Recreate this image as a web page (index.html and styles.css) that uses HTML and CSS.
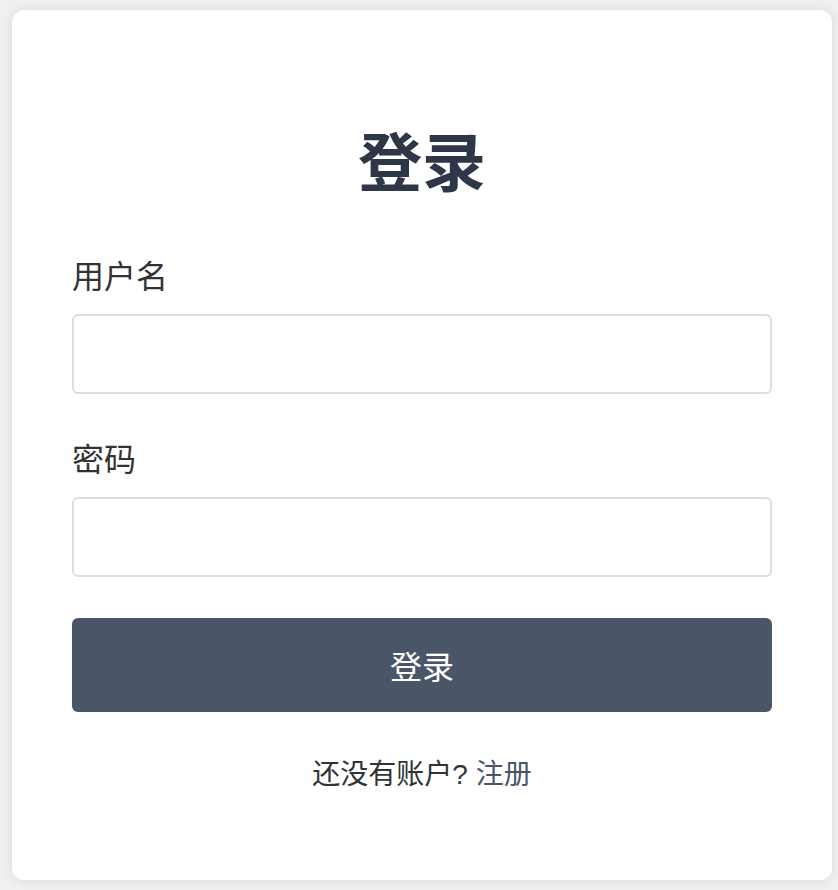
FILE: index.html
```html
<!DOCTYPE html>
<html lang="zh-CN">
<head>
<meta charset="utf-8">
<title>登录</title>
<link rel="stylesheet" href="styles.css">
</head>
<body>
<div class="card">
  <h1 class="title">登录</h1>
  <form class="form">
    <div class="group">
      <label class="label" for="u">用户名</label>
      <input class="input" id="u" type="text">
    </div>
    <div class="group">
      <label class="label" for="p">密码</label>
      <input class="input" id="p" type="password">
    </div>
    <button class="btn" type="button">登录</button>
  </form>
  <p class="footer">还没有账户? <a class="link" href="#">注册</a></p>
</div>
</body>
</html>
```
FILE: styles.css
```css
html, body {
  margin: 0;
  height: 100%;
}
body {
  background: #f0f0f0;
  padding: 10px 6px 10px 12px;
  box-sizing: border-box;
  font-family: "Liberation Sans", "Noto Sans CJK SC", sans-serif;
  color: #333;
}
.card {
  background: #fff;
  border-radius: 12px;
  box-shadow: 0 0 12px rgba(0, 0, 0, 0.1);
  height: 870px;
  box-sizing: border-box;
  padding: 118px 60px 0;
}
.title {
  margin: 0 0 56px;
  font-size: 64px;
  line-height: 72px;
  font-weight: 700;
  text-align: center;
  color: #2d3748;
}
.form {
  display: flex;
  flex-direction: column;
}
.group {
  display: flex;
  flex-direction: column;
  margin-bottom: 45px;
}
.group + .group {
  margin-bottom: 41px;
}
.label {
  font-size: 32px;
  line-height: 42px;
  margin-bottom: 16px;
  color: #333;
}
.input {
  height: 80px;
  box-sizing: border-box;
  border: 2px solid #ddd;
  border-radius: 6px;
  font-size: 28px;
  padding: 0 20px;
  outline: none;
}
.btn {
  height: 94px;
  border: none;
  border-radius: 6px;
  background: #4a5568;
  color: #fff;
  font-family: inherit;
  font-size: 32px;
  cursor: pointer;
}
.footer {
  margin: 43px 0 0;
  font-size: 28px;
  line-height: 39px;
  text-align: center;
  color: #333;
}
.link {
  color: #4a5568;
  text-decoration: none;
}
```
